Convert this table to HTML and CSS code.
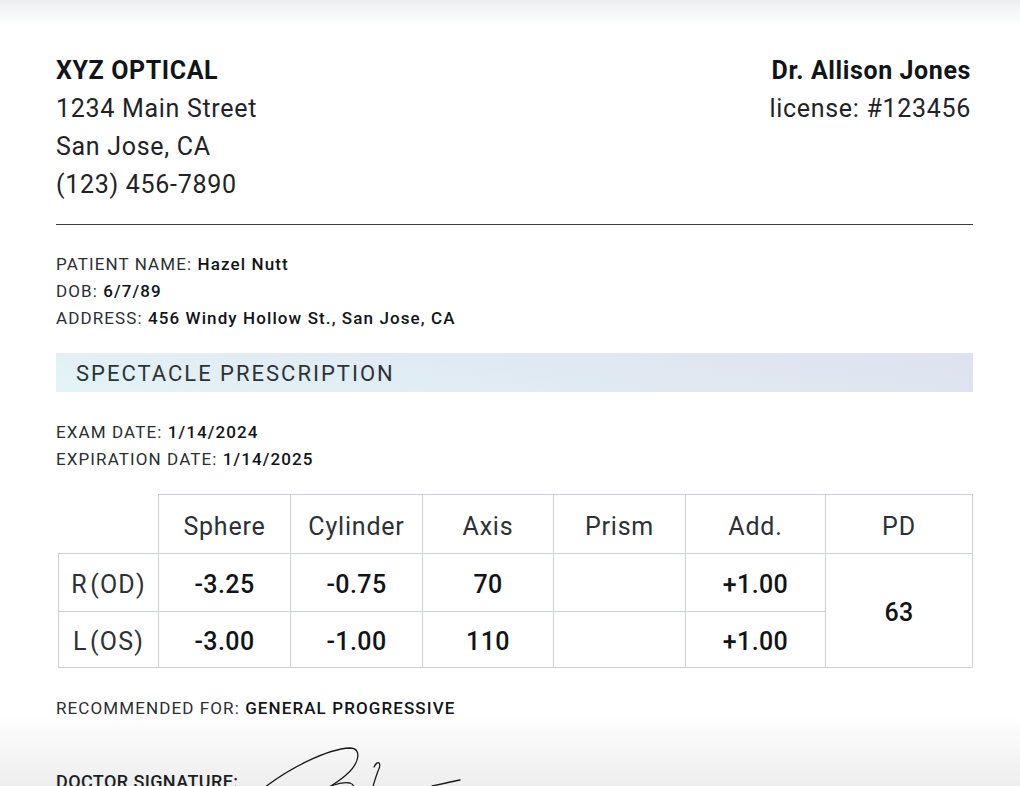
FILE: index.html
```html
<!DOCTYPE html>
<html lang="en">
<head>
<meta charset="utf-8">
<title>Spectacle Prescription</title>
<link rel="stylesheet" href="styles.css">
</head>
<body>
<div class="page">
  <header class="head">
    <div class="practice">
      <div class="name">XYZ OPTICAL</div>
      <div>1234 Main Street</div>
      <div>San Jose, CA</div>
      <div>(123) 456-7890</div>
    </div>
    <div class="doctor">
      <div class="name">Dr. Allison Jones</div>
      <div>license: #123456</div>
    </div>
  </header>
  <hr class="rule">
  <section class="info">
    <div><span class="lbl">PATIENT NAME:</span> <b>Hazel Nutt</b></div>
    <div><span class="lbl">DOB:</span> <b>6/7/89</b></div>
    <div><span class="lbl">ADDRESS:</span> <b>456 Windy Hollow St., San Jose, CA</b></div>
  </section>
  <h2 class="banner">SPECTACLE PRESCRIPTION</h2>
  <section class="info dates">
    <div><span class="lbl">EXAM DATE:</span> <b>1/14/2024</b></div>
    <div><span class="lbl">EXPIRATION DATE:</span> <b>1/14/2025</b></div>
  </section>
  <table class="rx">
    <colgroup>
      <col class="c0"><col class="c1"><col class="c2"><col class="c3"><col class="c4"><col class="c5"><col class="c6">
    </colgroup>
    <thead>
      <tr class="hrow">
        <th class="blank"></th>
        <th>Sphere</th>
        <th>Cylinder</th>
        <th>Axis</th>
        <th>Prism</th>
        <th>Add.</th>
        <th>PD</th>
      </tr>
    </thead>
    <tbody>
      <tr class="r1">
        <th class="eye">R (OD)</th>
        <td>-3.25</td>
        <td>-0.75</td>
        <td>70</td>
        <td></td>
        <td>+1.00</td>
        <td rowspan="2">63</td>
      </tr>
      <tr class="r2">
        <th class="eye">L (OS)</th>
        <td>-3.00</td>
        <td>-1.00</td>
        <td>110</td>
        <td></td>
        <td>+1.00</td>
      </tr>
    </tbody>
  </table>
  <div class="info rec"><span class="lbl">RECOMMENDED FOR:</span> <b>GENERAL PROGRESSIVE</b></div>
  <div class="sig">
    <span class="sig-label">DOCTOR SIGNATURE:</span>
    <svg class="sig-mark" width="210" height="60" viewBox="0 0 210 60" fill="none" stroke="#1a1a1a" stroke-width="1.3" stroke-linecap="round">
      <path d="M0 46 C 30 22, 68 4, 90 3 C 102 3, 100 18, 86 30 C 76 39, 62 46, 54 52"/>
      <path d="M56 50 C 66 42, 80 36, 90 38 C 96 40, 95 46, 92 54"/>
      <path d="M114 22 C 118 14, 122 18, 118 26 C 115 34, 112 44, 110 54"/>
      <path d="M106 46 C 114 41, 124 40, 132 44"/>
      <path d="M172 41 C 182 39, 190 37, 200 35"/>
    </svg>
  </div>
</div>
</body>
</html>
```

FILE: styles.css
```css
html, body {
  margin: 0;
  padding: 0;
}
html {
  height: 786px;
  background: linear-gradient(to bottom, #eceef0 0px, #ffffff 26px, #ffffff 712px, #eeeeee 786px);
}
body {
  font-family: Roboto, "Liberation Sans", Arial, sans-serif;
  color: #1b1f24;
  overflow: hidden;
  height: 786px;
}
.page {
  width: 917px;
  padding: 52px 0 0 56px;
}
.head {
  display: flex;
  justify-content: space-between;
  font-size: 25px;
  line-height: 38px;
  color: #1f2328;
  letter-spacing: 0.7px;
}
.head .name {
  font-weight: 700;
  color: #111418;
  letter-spacing: 0.6px;
}
.doctor {
  text-align: right;
  padding-right: 2px;
}
.rule {
  border: 0;
  border-top: 1px solid #3a3a3a;
  margin: 20px 0 0 0;
  height: 0;
}
.info {
  font-size: 17px;
  line-height: 27px;
  color: #2a2e33;
  letter-spacing: 1.1px;
}
.info b {
  font-weight: 500;
  color: #111418;
  letter-spacing: 1.1px;
}
.rule + .info {
  margin-top: 26px;
}
.banner {
  margin: 21px 0 0 0;
  height: 39px;
  padding: 0 0 0 20px;
  font-size: 22px;
  font-weight: 400;
  line-height: 42px;
  letter-spacing: 2px;
  color: #2e3338;
  background: linear-gradient(10deg, #e3f4f8 0%, #e0eaf2 50%, #dee2ef 100%);
}
.dates {
  margin-top: 27px;
}
.rx {
  margin: 21px 0 0 2px;
  width: 914px;
  border-collapse: collapse;
  table-layout: fixed;
  font-size: 25px;
}
.c0 { width: 100px; }
.c1 { width: 132px; }
.c2 { width: 132px; }
.c3 { width: 131px; }
.c4 { width: 132px; }
.c5 { width: 140px; }
.c6 { width: 147px; }
.rx th, .rx td {
  border: 1px solid #cdd0d5;
  text-align: center;
  padding: 4px 0 0 0;
}
.rx thead th {
  font-weight: 400;
  color: #2c3136;
  letter-spacing: 0.8px;
}
.rx .blank {
  border-top: 0;
  border-left: 0;
}
.hrow { height: 59px; }
.r1 { height: 58px; }
.r2 { height: 56px; }
.rx td {
  font-weight: 500;
  color: #111418;
  letter-spacing: 0.4px;
}
.rx .eye {
  font-weight: 400;
  color: #2c3136;
  letter-spacing: 1.2px;
  word-spacing: -5px;
}
.rec {
  margin-top: 27px;
}
.sig {
  display: flex;
  align-items: flex-start;
  gap: 22px;
  margin-top: 45px;
}
.sig-label {
  font-size: 18px;
  font-weight: 500;
  letter-spacing: 0.4px;
  color: #1b1f24;
  line-height: 30px;
  white-space: nowrap;
}
.sig-mark {
  display: block;
  flex: none;
  margin-top: -22px;
}
```
